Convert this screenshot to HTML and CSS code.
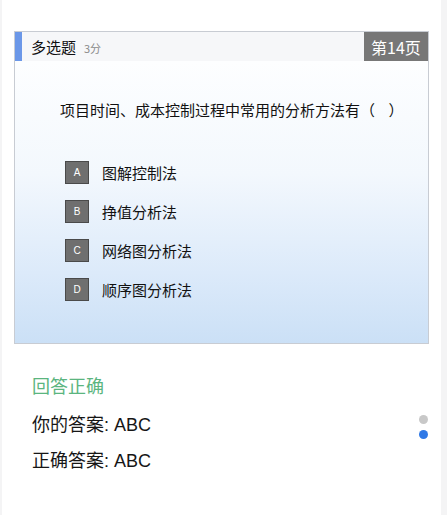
FILE: index.html
```html
<!DOCTYPE html>
<html lang="zh">
<head>
<meta charset="utf-8">
<title>多选题</title>
<link rel="stylesheet" href="styles.css">
</head>
<body>
<div class="page">
  <div class="card">
    <div class="card-head">
      <span class="mark"></span>
      <span class="qtype">多选题</span>
      <span class="score">3分</span>
      <span class="pageno">第14页</span>
    </div>
    <div class="card-body">
      <p class="question">项目时间、成本控制过程中常用的分析方法有（&nbsp;&nbsp;&nbsp;&nbsp;）</p>
      <ul class="options">
        <li class="option"><span class="letter">A</span><span class="opt-text">图解控制法</span></li>
        <li class="option"><span class="letter">B</span><span class="opt-text">挣值分析法</span></li>
        <li class="option"><span class="letter">C</span><span class="opt-text">网络图分析法</span></li>
        <li class="option"><span class="letter">D</span><span class="opt-text">顺序图分析法</span></li>
      </ul>
    </div>
  </div>
  <div class="result">
    <div class="answers">
      <div class="status">回答正确</div>
      <div class="line">你的答案: ABC</div>
      <div class="line">正确答案: ABC</div>
    </div>
    <div class="dots">
      <span class="dot gray"></span>
      <span class="dot blue"></span>
    </div>
  </div>
</div>
</body>
</html>
```

FILE: styles.css
```css
* { box-sizing: border-box; }
html, body { margin: 0; padding: 0; }
body {
  background: #f4f4f5;
  font-family: "Noto Sans CJK SC", "Liberation Sans", sans-serif;
  color: #1a1a1a;
}
.page {
  background: #ffffff;
  margin: 0 6px 0 2px;
  min-height: 515px;
  padding: 31px 12px 0 12px;
}
.card {
  border: 1px solid #c8ccd3;
}
.card-head {
  display: flex;
  align-items: center;
  height: 29px;
  background: #f6f7f9;
}
.mark {
  width: 7px;
  align-self: stretch;
  background: #6b97e8;
}
.qtype {
  margin-left: 9px;
  font-size: 15px;
  color: #111111;
}
.score {
  margin-left: 8px;
  margin-top: 3px;
  font-size: 11px;
  color: #8a8a8a;
}
.pageno {
  margin-left: auto;
  align-self: stretch;
  width: 64px;
  background: #777777;
  color: #ffffff;
  font-size: 16px;
  display: flex;
  align-items: center;
  justify-content: center;
}
.card-body {
  background: linear-gradient(180deg, #fdfeff 0%, #f3f8fd 40%, #dceafa 75%, #cbe0f6 100%);
  padding: 39px 0 34px 0;
}
.question {
  margin: 0;
  font-size: 15px;
  line-height: 20px;
  padding-left: 45px;
  white-space: nowrap;
  color: #111111;
}
.options {
  list-style: none;
  margin: 33px 0 0 0;
  padding: 0 0 0 50px;
}
.option {
  display: flex;
  align-items: center;
  height: 39px;
}
.letter {
  width: 24px;
  height: 23px;
  background: #6f6f6f;
  border: 1px solid #4a4a4a;
  color: #ffffff;
  font-family: "Liberation Sans", sans-serif;
  font-size: 10px;
  display: flex;
  align-items: center;
  justify-content: center;
}
.opt-text {
  margin-left: 13px;
  font-size: 15px;
  color: #111111;
}
.result {
  display: flex;
  justify-content: space-between;
  padding: 28px 1px 0 18px;
}
.status {
  font-size: 18px;
  line-height: 26px;
  color: #5bb57f;
}
.line {
  font-family: "Liberation Sans", "Noto Sans CJK SC", sans-serif;
  font-size: 18px;
  line-height: 26px;
  margin-top: 14px;
  color: #161616;
}
.line + .line { margin-top: 10px; }
.dots {
  display: flex;
  flex-direction: column;
  gap: 6px;
  padding-top: 43px;
}
.dot {
  width: 9px;
  height: 9px;
  border-radius: 50%;
}
.dot.gray { background: #c8c8c8; }
.dot.blue { background: #2f79e6; }
```
